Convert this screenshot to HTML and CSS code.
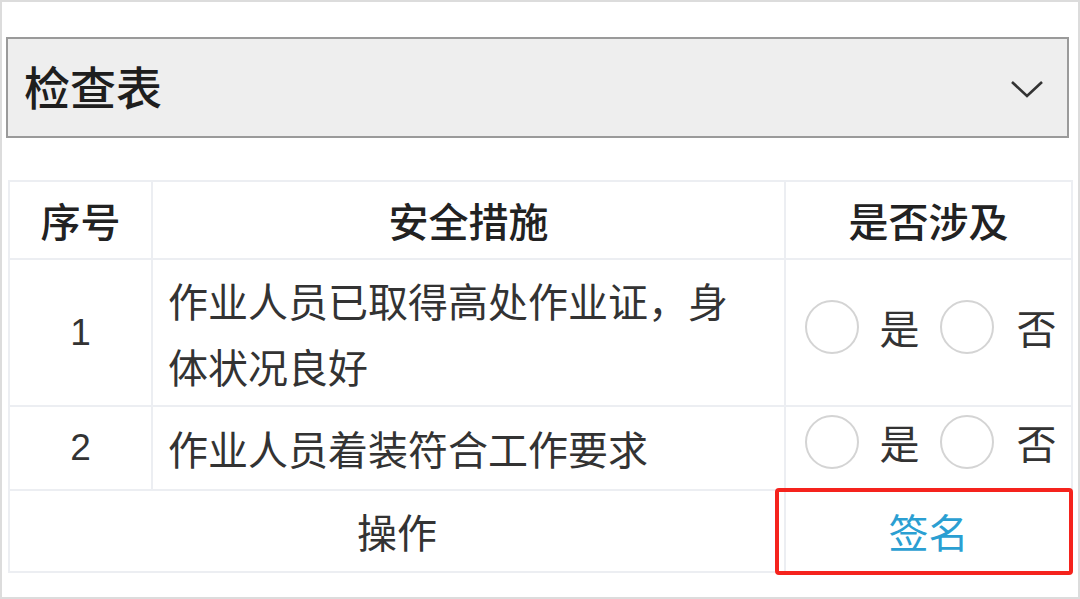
FILE: index.html
```html
<!DOCTYPE html>
<html lang="zh-CN">
<head>
<meta charset="utf-8">
<link rel="stylesheet" href="styles.css">
</head>
<body>
<div class="frame">
  <div class="select">
    <span class="select-label">检查表</span>
    <svg class="chevron" width="34" height="20" viewBox="0 0 34 20"><path d="M2 3 L17 17 L32 3" fill="none" stroke="#333" stroke-width="2.6"/></svg>
  </div>
  <div class="table-wrap">
    <table class="check">
      <colgroup>
        <col class="c-no">
        <col class="c-item">
        <col class="c-opt">
      </colgroup>
      <thead>
        <tr><th>序号</th><th>安全措施</th><th>是否涉及</th></tr>
      </thead>
      <tbody>
        <tr>
          <td class="num">1</td>
          <td class="item">作业人员已取得高处作业证，身<br>体状况良好</td>
          <td class="opt"><span class="radios"><span class="radio"></span><span class="rl">是</span><span class="radio"></span><span class="rl">否</span></span></td>
        </tr>
        <tr>
          <td class="num">2</td>
          <td class="item">作业人员着装符合工作要求</td>
          <td class="opt"><span class="radios"><span class="radio"></span><span class="rl">是</span><span class="radio"></span><span class="rl">否</span></span></td>
        </tr>
        <tr class="actions">
          <td colspan="2" class="op">操作</td>
          <td class="sign">签名</td>
        </tr>
      </tbody>
    </table>
    <div class="highlight"></div>
  </div>
</div>
</body>
</html>
```
FILE: styles.css
```css
html, body {
  margin: 0;
  padding: 0;
  background: #fff;
}
body {
  font-family: "Noto Sans CJK SC", "Noto Sans", sans-serif;
  color: #333;
}
.frame {
  box-sizing: border-box;
  width: 1080px;
  height: 599px;
  border: 2px solid #dcdcdc;
  padding: 35px 9px 0 4px;
}
.select {
  box-sizing: border-box;
  height: 101px;
  border: 2px solid #9a9a9a;
  background: #eeeeee;
  display: flex;
  align-items: center;
  justify-content: space-between;
  padding: 0 23px 0 16px;
}
.select-label {
  font-size: 46px;
  font-weight: 500;
  color: #1e1e1e;
  margin-bottom: 6px;
}
.chevron {
  margin-top: 2px;
}
.table-wrap {
  position: relative;
  margin: 42px 0 0 2px;
  width: 1063px;
}
.check {
  width: 1063px;
  border-collapse: collapse;
  table-layout: fixed;
  border: 2px solid #eceef2;
}
.c-no { width: 143px; }
.c-item { width: 633px; }
.c-opt { width: 287px; }
.check th, .check td {
  border: 2px solid #eceef2;
  padding: 0;
  font-size: 40px;
}
.check th {
  height: 76px;
  font-weight: 500;
  color: #222;
  text-align: center;
}
.check td.num {
  text-align: center;
  font-family: "Liberation Sans", "Noto Sans CJK SC", sans-serif;
  font-size: 37px;
  color: #333;
}
.check td.item {
  padding: 7px 10px 6px 15px;
  line-height: 66px;
  color: #333;
}
.check tbody tr:nth-child(2) td.item {
  padding-top: 8px;
  padding-bottom: 8px;
}
.check td.opt {
  text-align: center;
  vertical-align: middle;
  padding-left: 4px;
}
.radios {
  display: inline-flex;
  align-items: center;
}
.radio {
  box-sizing: border-box;
  width: 54px;
  height: 54px;
  border: 2px solid #d4d4d4;
  border-radius: 50%;
  background: #fff;
}
.rl {
  font-size: 40px;
  color: #333;
  margin: 0 20px 0 21px;
  line-height: 1;
}
.rl:last-child {
  margin-right: 0;
  margin-left: 23px;
}
.actions td {
  height: 80px;
  text-align: center;
}
.check td.op {
  color: #333;
}
.check td.sign {
  color: #2b9fd2;
}
.highlight {
  position: absolute;
  left: 767px;
  top: 308px;
  width: 298px;
  height: 87px;
  box-sizing: border-box;
  border: 4px solid #f5231d;
  border-radius: 4px;
}
```
